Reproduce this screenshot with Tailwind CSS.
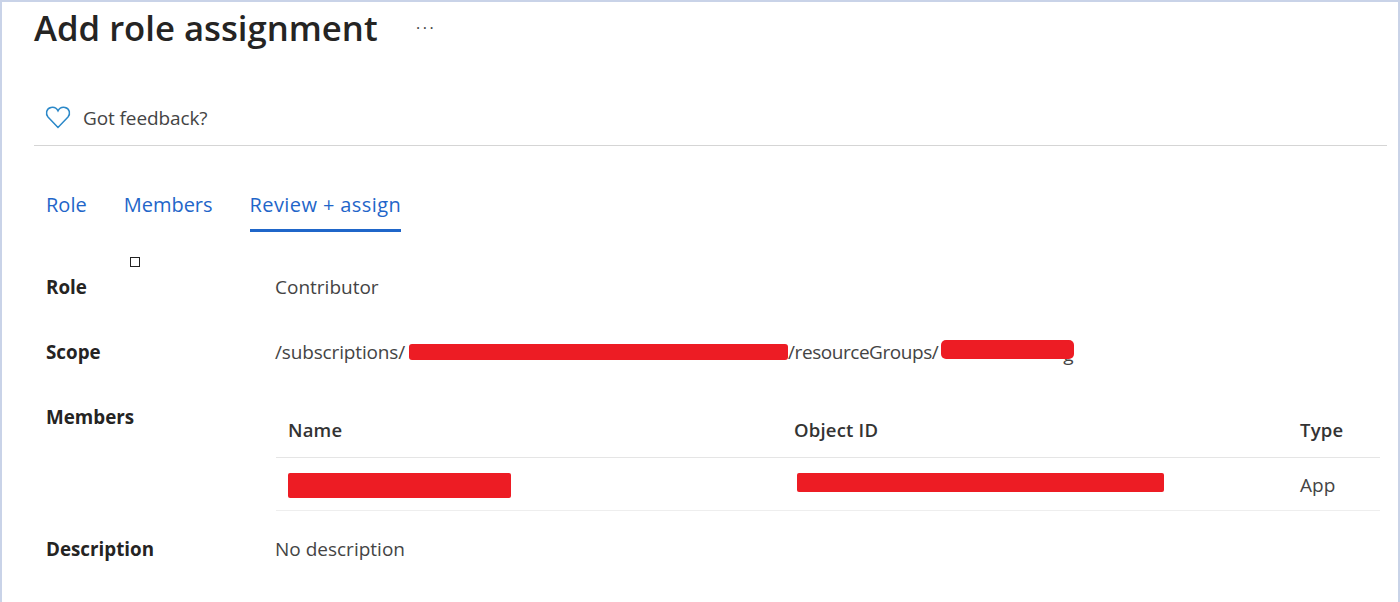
<!DOCTYPE html>
<html lang="en">
<head>
    <meta charset="UTF-8">
    <title>Add role assignment</title>
    <script src="https://cdn.jsdelivr.net/npm/@tailwindcss/browser@4"></script>
</head>
<body class="bg-white font-['Open_Sans',sans-serif] text-[#323130]">
<div class="relative w-[1400px] h-[602px] overflow-hidden bg-white border-t-2 border-l-2 border-r-2 border-[#c9d3e8]">

    <!-- Header -->
    <div class="ml-[32px] mr-[10px] h-[52px] flex items-center">
        <h1 class="text-[34.7px] leading-[52px] -mt-[1px] font-semibold text-[#252423] w-[382px]">Add role assignment</h1>
        <span class="text-[#444] text-[16px] tracking-[2.5px]">···</span>
    </div>

    <!-- Feedback -->
    <div class="ml-[32px] mr-[11px] h-[92px] border-b border-[#d5d5d5] flex items-center gap-[12px] pl-[11px] pt-[53px] pb-[18px]">
        <svg width="26" height="24" viewBox="0 0 26 24" fill="none" stroke="#2b88c8" stroke-width="1.5">
            <path d="M13 22.5 L3 12 C0.5 9 1 3.5 6 2.4 C9.2 1.8 11.8 3.5 13 5.8 C14.2 3.5 16.8 1.8 20 2.4 C25 3.5 25.5 9 23 12 Z"/>
        </svg>
        <span class="text-[19px] text-[#444] tracking-[-0.1px] mt-[2px]">Got feedback?</span>
    </div>

    <!-- Tabs -->
    <div class="ml-[44px] mt-[38px] flex gap-[37px] text-[20px] text-[#1f66c9] leading-[42px]">
        <a class="h-[48px]">Role</a>
        <a class="h-[48px]">Members</a>
        <a class="h-[48px] border-b-[3px] border-[#1f66c9] tracking-[0.4px]">Review + assign</a>
    </div>

    <!-- Stray selection handle from the capture -->
    <div class="absolute left-[128px] top-[255px] w-[10px] h-[10px] border border-[#222] bg-white"></div>

    <!-- Details -->
    <div class="ml-[44px] mt-[37px] text-[19px] text-[#444]">
        <div class="flex h-[65px]">
            <div class="w-[229px] font-bold text-[#252423] text-[18.8px] leading-[36px]">Role</div>
            <div class="leading-[36px]">Contributor</div>
        </div>
        <div class="flex h-[65px]">
            <div class="w-[229px] font-bold text-[#252423] text-[18.8px] leading-[36px]">Scope</div>
            <div class="leading-[36px] flex items-center h-[36px] whitespace-nowrap">
                <span class="tracking-[-0.15px]">/subscriptions/</span>
                <span class="w-[379px] h-[16px] -mt-[1px] bg-[#ed1c24] rounded-[3px] ml-[4px]"></span>
                <span class="tracking-[-0.45px]">/resourceGroups/</span>
                <span class="relative z-10 w-[133px] h-[19px] -mt-[5px] bg-[#ed1c24] rounded-[5px] ml-[3px]"></span>
                <span class="-ml-[11px] mt-[4px]">g</span>
            </div>
        </div>
        <div class="flex h-[132px]">
            <div class="w-[229px] font-bold text-[#252423] text-[18.8px] leading-[36px]">Members</div>
            <div class="w-[1105px]">
                <div class="h-[39px] ml-[1px] border-b border-[#e5e5e5] grid grid-cols-[506px_506px_1fr] pl-[12px] text-[18.5px] font-semibold tracking-[0.2px] text-[#333] leading-[26px] pt-[1px] mt-[17px] box-content pb-[1px]">
                    <div>Name</div><div>Object ID</div><div>Type</div>
                </div>
                <div class="h-[53px] ml-[1px] pt-[3px] border-b border-[#eee] grid grid-cols-[506px_506px_1fr] pl-[12px] items-center">
                    <div class="w-[223px] h-[25px] bg-[#ed1c24] rounded-[2px]"></div>
                    <div class="w-[367px] h-[19px] -mt-[6px] ml-[3px] bg-[#ed1c24] rounded-[2px]"></div>
                    <div class="text-[19px]">App</div>
                </div>
            </div>
        </div>
        <div class="flex">
            <div class="w-[229px] font-bold text-[#252423] text-[18.8px] leading-[36px]">Description</div>
            <div class="leading-[36px]">No description</div>
        </div>
    </div>
</div>
</body>
</html>
